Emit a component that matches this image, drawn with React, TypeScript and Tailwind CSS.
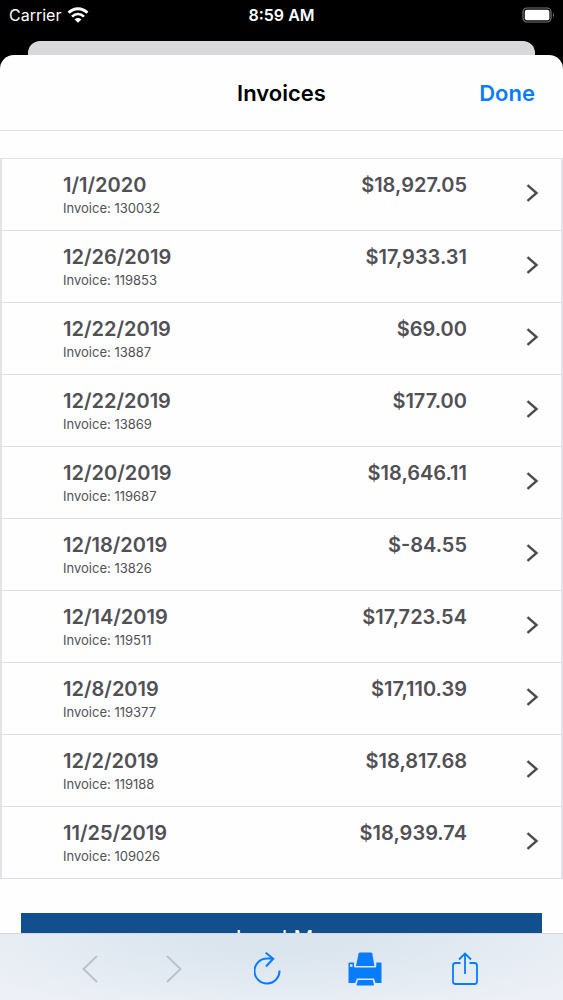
import React from "react";

type Invoice = { date: string; id: string; amount: string };

const invoices: Invoice[] = [
  { date: "1/1/2020", id: "130032", amount: "$18,927.05" },
  { date: "12/26/2019", id: "119853", amount: "$17,933.31" },
  { date: "12/22/2019", id: "13887", amount: "$69.00" },
  { date: "12/22/2019", id: "13869", amount: "$177.00" },
  { date: "12/20/2019", id: "119687", amount: "$18,646.11" },
  { date: "12/18/2019", id: "13826", amount: "$-84.55" },
  { date: "12/14/2019", id: "119511", amount: "$17,723.54" },
  { date: "12/8/2019", id: "119377", amount: "$17,110.39" },
  { date: "12/2/2019", id: "119188", amount: "$18,817.68" },
  { date: "11/25/2019", id: "109026", amount: "$18,939.74" },
];

function StatusBar() {
  return (
    <div className="grid h-[41px] shrink-0 grid-cols-3 items-center px-2 pb-3 text-white">
      <div className="flex items-center gap-[6px] pl-px">
        <span className="text-[16px] leading-5">Carrier</span>
        <svg width="22" height="16" viewBox="0 0 22 16" fill="none" stroke="white" aria-hidden="true">
          <path d="M1.6 5.8C7 .3 15 .3 20.4 5.8" strokeWidth="3" />
          <path d="M5 9.6C8.6 6.2 13.4 6.2 17 9.6" strokeWidth="2.6" />
          <path d="M11 15.8 7.6 12.4C9.6 10.6 12.4 10.6 14.4 12.4Z" fill="white" stroke="none" />
        </svg>
      </div>
      <span className="text-center text-[16px] font-semibold leading-5">8:59 AM</span>
      <svg className="-mr-1 justify-self-end" width="37" height="16" viewBox="0 0 37 16" aria-hidden="true">
        <rect x="1" y="1" width="28" height="14" rx="4" fill="none" stroke="#77777b" strokeWidth="1.2" />
        <rect x="2.8" y="2.8" width="24.6" height="10.4" rx="2" fill="white" />
        <path d="M31 5.5Q33 8 31 10.5Z" fill="#77777b" />
      </svg>
    </div>
  );
}

function InvoiceRow({ invoice }: { invoice: Invoice }) {
  return (
    <li className="border-b border-[#dedee2]">
      <a href="#invoice" className="flex h-[71px] items-start pl-[61px] pr-[22px] pt-[14px]">
        <span className="flex flex-1 flex-col">
          <span className="text-[20px] font-semibold leading-6">{invoice.date}</span>
          <span className="text-[13px] leading-[22px]">Invoice: {invoice.id}</span>
        </span>
        <span className="w-40 text-right text-[20px] font-semibold leading-6">{invoice.amount}</span>
        <svg className="ml-[58px] mt-[11px]" width="14" height="18" viewBox="0 0 14 18" fill="none" stroke="#4b4a50" strokeWidth="2.4" aria-hidden="true">
          <path d="M2.5 1.2 11.5 9 2.5 16.8" />
        </svg>
      </a>
    </li>
  );
}

function Toolbar() {
  return (
    <nav
      aria-label="Page tools"
      className="flex h-[67px] shrink-0 items-center justify-between border-t border-[#d4d9df] bg-[#edf0f6] bg-[radial-gradient(ellipse_at_top,#dae5ee_20%,#edf0f6_90%)] pl-[74px] pr-20 pt-1 text-[#087cff]"
    >
      <div className="flex gap-[52px] text-[#bcc1cb]">
        <button aria-label="Back" disabled className="flex size-8 items-center justify-center">
          <svg width="16" height="28" viewBox="0 0 16 28" fill="none" stroke="currentColor" strokeWidth="2">
            <path d="M15 1 1.5 14 15 27" />
          </svg>
        </button>
        <button aria-label="Forward" disabled className="flex size-8 items-center justify-center">
          <svg width="16" height="28" viewBox="0 0 16 28" fill="none" stroke="currentColor" strokeWidth="2">
            <path d="M1 1 14.5 14 1 27" />
          </svg>
        </button>
      </div>
      <button aria-label="Reload" className="flex h-9 w-7 items-center justify-center">
        <svg width="28" height="34" viewBox="0 0 28 34" fill="none" stroke="currentColor" strokeWidth="2">
          <path d="M25.5 18.5A12.5 12.5 0 1 1 13 6.5H19.5M11.7 .7 19.2 6.8 12 14.5" />
        </svg>
      </button>
      <button aria-label="Print" className="flex size-9 items-center justify-center">
        <svg width="34" height="34" viewBox="0 0 34 34" fill="currentColor">
          <path d="M12 .5H23Q24 .5 24.3 1.5L26.4 14H8L10.6 1.5Q11 .5 12 .5Z" />
          <path
            fillRule="evenodd"
            d="M1.5 10.5H6V14Q6 15.5 7.5 15.5H27Q28.3 15.5 28.3 14V10.5H32.5Q33.5 10.5 33.5 11.5V31H27.5L26 26.5H9L7.2 31H.5V11.5Q.5 10.5 1.5 10.5ZM2 12.2V14.8H4.5V12.2Z"
          />
          <path d="M10 28H24.7L26 32.4Q26 33.5 25 33.5H9.3Q8.3 33.5 8.5 32.4Z" />
        </svg>
      </button>
      <button aria-label="Share" className="flex size-9 items-center justify-center">
        <svg width="28" height="34" viewBox="0 0 28 34" fill="none" stroke="currentColor" strokeWidth="1.8">
          <path d="M9.5 11H4.5Q2 11 2 13.5V29.5Q2 32 4.5 32H23.5Q26 32 26 29.5V13.5Q26 11 23.5 11H18.5M14 22V1.5M8 7.5 14 1.5 20 7.5" />
        </svg>
      </button>
    </nav>
  );
}

export default function App() {
  return (
    <div className="flex h-screen flex-col overflow-hidden bg-black font-['Inter','Liberation_Sans',sans-serif] text-[#515055]">
      <StatusBar />
      <div className="mx-7 h-[14px] shrink-0 rounded-t-[12px] bg-[#d9d8db]" />
      <main className="flex min-h-0 flex-1 flex-col overflow-hidden rounded-t-[14px] bg-[#fefefe]">
        <header className="grid h-[76px] shrink-0 grid-cols-[1fr_auto_1fr] items-center border-b border-[#dedee0] px-7">
          <h1 className="col-start-2 text-[22px] font-semibold leading-7 text-black">Invoices</h1>
          <button className="justify-self-end text-[22px] font-semibold leading-7 text-[#087cff]">Done</button>
        </header>
        <section className="min-h-0 flex-1 overflow-y-auto pt-[27px] [scrollbar-width:none]">
          <ul className="border-x-2 border-t border-[#e3e3e7]">
            {invoices.map((invoice) => (
              <InvoiceRow key={invoice.id} invoice={invoice} />
            ))}
          </ul>
          <div className="px-[21px] pt-[34px]">
            <button className="h-[50px] w-full bg-[#114f8e] pl-5 text-[22px] text-white">Load More</button>
          </div>
        </section>
        <Toolbar />
      </main>
    </div>
  );
}
